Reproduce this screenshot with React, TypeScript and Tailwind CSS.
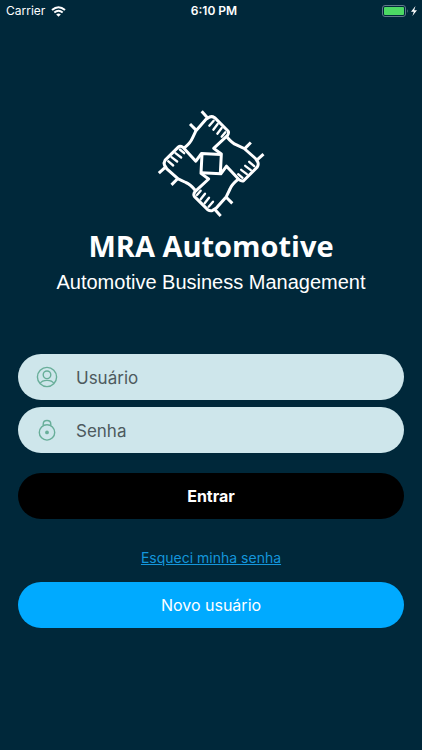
import { useState } from "react";

// One fist of the emblem; the other three are quarter turns of it.
function Fist({ turn }: { turn: number }) {
  return (
    <g transform={`rotate(${turn} 183.5 179)`}>
      <path d="M155 22 L173 42" />
      <path d="M104 131 Q122 116 127 103 L138 80 L168 46 L179 39 Q186 36 194 41 L234 81 Q238 86 232 95 L191 133 L214 150 L211 208" />
      <path d="M120 60 L139 79" />
      <path strokeWidth="7" strokeLinecap="round" d="M191 50 L178 65 M203 60 L190 77 M215 72 L202 89 M226 85 L215 98" />
    </g>
  );
}

function Logo() {
  return (
    <svg
      viewBox="0 0 366 360"
      className="h-[120px] w-[122px]"
      fill="none"
      stroke="#ffffff"
      strokeWidth="9"
      strokeLinejoin="round"
      aria-hidden="true"
    >
      <Fist turn={0} />
      <Fist turn={90} />
      <Fist turn={180} />
      <Fist turn={270} />
    </svg>
  );
}

function WifiIcon() {
  return (
    <svg viewBox="0 0 15 11" className="h-[11px] w-[15px]" fill="none" stroke="#ffffff" aria-hidden="true">
      <path d="M1 4.1 Q7.5 -1.7 14 4.1" strokeWidth="2" />
      <path d="M3.3 6.5 Q7.5 2.9 11.7 6.5" strokeWidth="1.9" />
      <path d="M5.2 8.4 Q7.5 6.5 9.8 8.4 L7.5 10.8 Z" fill="#ffffff" stroke="none" />
    </svg>
  );
}

function BatteryIcon() {
  return (
    <svg viewBox="0 0 36 12" className="h-3 w-9" aria-hidden="true">
      <rect x="0.5" y="0.5" width="23" height="11" rx="2.5" fill="none" stroke="#60798a" />
      <rect x="2" y="2" width="20" height="8" rx="1" fill="#4cd964" />
      <path d="M25 4 Q26.6 6 25 8 Z" fill="#60798a" />
      <path d="M33.5 1 L29 6.7 H31.8 L30.4 11 L35 5.2 H32.2 Z" fill="#ffffff" />
    </svg>
  );
}

function UserIcon() {
  return (
    <svg viewBox="0 0 22 22" className="h-[22px] w-[22px]" fill="none" stroke="#68ae99" strokeWidth="1.4" aria-hidden="true">
      <circle cx="11" cy="11" r="9.6" />
      <circle cx="11" cy="8.8" r="3.8" />
      <path d="M4.2 17.4 Q5.8 14.4 11 14.4 Q16.2 14.4 17.8 17.4" />
    </svg>
  );
}

function LockIcon() {
  return (
    <svg viewBox="0 0 22 22" className="h-[22px] w-[22px]" fill="none" stroke="#68ae99" strokeWidth="1.4" aria-hidden="true">
      <circle cx="11" cy="13.4" r="7.7" />
      <path d="M7.2 6.6 V5.2 Q7.2 1.5 11 1.5 Q14.8 1.5 14.8 5.2 V6.6" />
      <circle cx="11" cy="13.4" r="1.2" fill="#68ae99" />
    </svg>
  );
}

const fieldClass =
  "flex h-[46px] items-center gap-[18px] rounded-full bg-[#cee6eb] pl-[18px] pr-5";
const inputClass =
  "h-full min-w-0 flex-1 bg-transparent pt-[2px] text-[17px] text-[#4d5a5e] outline-none placeholder:text-[#4d5a5e]";

export default function App() {
  const [user, setUser] = useState("");
  const [password, setPassword] = useState("");

  return (
    <div className="min-h-screen bg-[#00283a] font-['Inter',sans-serif] text-white">
      <header className="grid h-[22px] grid-cols-3 items-center pl-[6px] pr-1 text-xs">
        <div className="flex items-center gap-[6px]">
          <span>Carrier</span>
          <WifiIcon />
        </div>
        <span className="pl-1 text-center font-semibold">6:10 PM</span>
        <div className="flex justify-end">
          <BatteryIcon />
        </div>
      </header>

      <main className="px-[18px]">
        <div className="flex flex-col items-center pt-[82px]">
          <Logo />
          <h1 className="font-['Open_Sans',sans-serif] text-[29px] leading-[44px] font-bold">
            MRA Automotive
          </h1>
          <p className="font-['Liberation_Sans',Arial,sans-serif] text-xl leading-7 whitespace-nowrap">
            Automotive Business Management
          </p>
        </div>

        <form className="pt-[58px]" onSubmit={(e) => e.preventDefault()}>
          <div className="flex flex-col gap-[7px]">
            <label className={fieldClass}>
              <UserIcon />
              <input
                type="text"
                aria-label="Usuário"
                placeholder="Usuário"
                value={user}
                onChange={(e) => setUser(e.target.value)}
                className={inputClass}
              />
            </label>
            <label className={fieldClass}>
              <LockIcon />
              <input
                type="password"
                aria-label="Senha"
                placeholder="Senha"
                value={password}
                onChange={(e) => setPassword(e.target.value)}
                className={inputClass}
              />
            </label>
          </div>

          <button type="submit" className="mt-5 h-[46px] w-full rounded-full bg-black text-base font-bold">
            Entrar
          </button>
        </form>

        <div className="flex justify-center pt-[29px]">
          <a href="#" className="text-sm text-[#1496db] underline">
            Esqueci minha senha
          </a>
        </div>
        <button type="button" className="mt-[14px] h-[46px] w-full rounded-full bg-[#00aaff] text-base">
          Novo usuário
        </button>
      </main>
    </div>
  );
}
